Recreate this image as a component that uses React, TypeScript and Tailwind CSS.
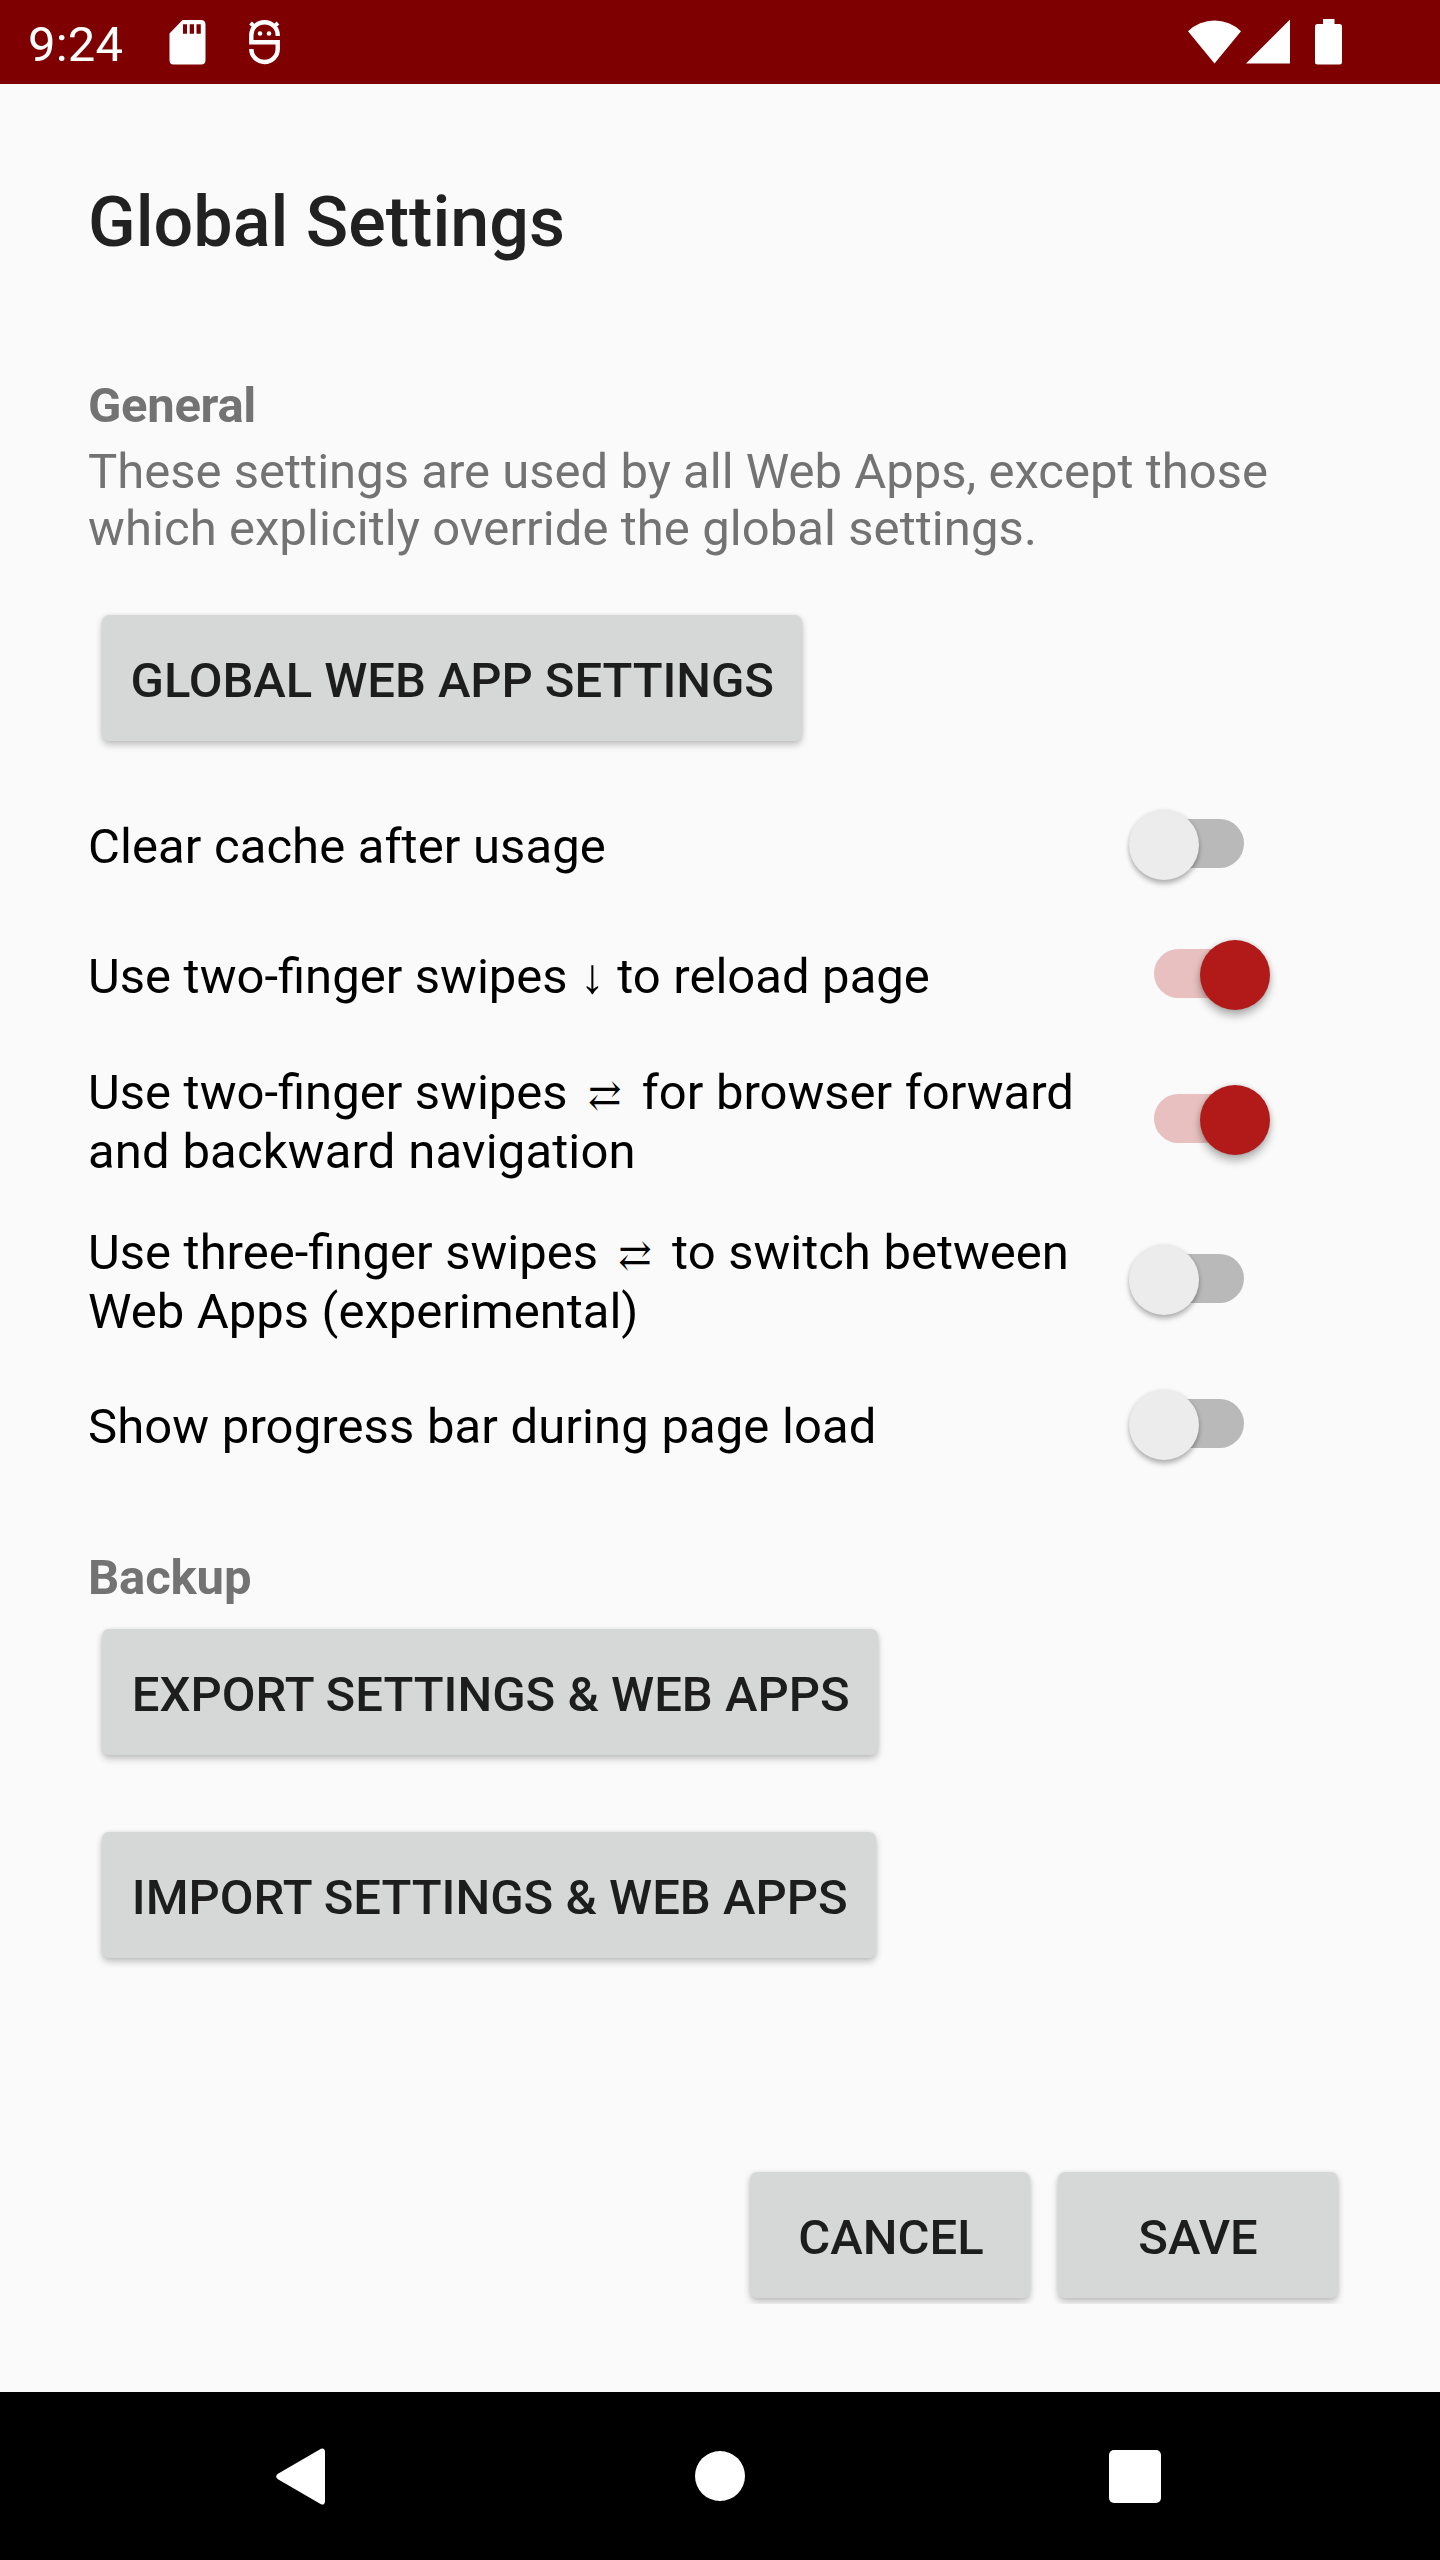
import type { ReactNode } from "react";

function StatusBar() {
  return (
    <header className="flex h-[84px] items-start bg-[#7f0000] text-white">
      <span className="ml-[28px] mt-4 w-[141px] text-[49px] leading-[57px] tracking-[0.2px]">9:24</span>
      <svg className="mt-5" width="37" height="45" viewBox="0 0 37 45" fill="currentColor">
        <path
          fillRule="evenodd"
          d="M13.500 0H32Q36.500 0 36.500 4.500V40Q36.500 44.500 32 44.500H4.500Q0.500 44.500 0.500 40V13.500ZM14 4.300V13.700H18V4.300ZM20.700 4.300V13.700H25V4.300ZM27.500 4.300V13.700H31.800V4.300Z"
        />
      </svg>
      <svg className="ml-[43px] mt-5" width="31" height="45" viewBox="0 0 31 45" fill="none" stroke="currentColor" strokeWidth="4.400">
        <path d="M28.700 16V15A13.200 12.700 0 0 0 2.300 15V22.300H28.700V29A13.200 13 0 0 1 2.300 29" />
        <path d="M1.500 3 6 7M29 3 24.500 7" strokeWidth="4" />
        <circle cx="11" cy="13.500" r="2.300" fill="currentColor" stroke="none" />
        <circle cx="20" cy="13.500" r="2.300" fill="currentColor" stroke="none" />
      </svg>
      <svg className="ml-auto mt-[19px]" width="53" height="45" viewBox="0 0 53 45" fill="currentColor">
        <path d="M26.500 44.500 0 12.300A38 38 0 0 1 53 12.300Z" />
      </svg>
      <svg className="ml-[5px] mt-[19px]" width="44" height="45" viewBox="0 0 44 45" fill="currentColor">
        <path d="M44 0.500V44.500H0Z" />
      </svg>
      <svg className="ml-[25px] mr-[98px] mt-[19px]" width="27" height="46" viewBox="0 0 27 46" fill="currentColor">
        <path d="M8 0H19.500V5H24.500Q27 5 27 7.500V43Q27 45.500 24.500 45.500H2.500Q0 45.500 0 43V7.500Q0 5 2.500 5H8Z" />
      </svg>
    </header>
  );
}

function Button({ children, className = "" }: { children: ReactNode; className?: string }) {
  return (
    <button
      className={`block h-[126px] shrink-0 whitespace-nowrap rounded-[7px] bg-[#d6d8d7] pt-[4px] text-[49px] font-medium leading-[57px] text-[#1d1d1d] shadow-[0_4px_7px_rgba(0,0,0,0.22),0_0_4px_rgba(0,0,0,0.08)] ${className}`}
    >
      {children}
    </button>
  );
}

function Switch({ on = false, className = "" }: { on?: boolean; className?: string }) {
  return (
    <span role="switch" aria-checked={on} className={`relative flex h-[70px] items-center ${className}`}>
      <span className={`mb-[3px] h-[49px] w-[106px] rounded-full ${on ? "ml-[26px] bg-[#e8c0c0]" : "ml-[10px] bg-[#b9b9b9]"}`} />
      <span
        className={`absolute top-[-0.5px] size-[70.5px] rounded-full ${
          on
            ? "left-[71.5px] bg-[#b21a1a] shadow-[0_6px_8px_rgba(0,0,0,0.28),0_0_5px_rgba(0,0,0,0.15)]"
            : "left-[0.5px] bg-[#ececec] shadow-[0_4px_5px_rgba(0,0,0,0.26),0_0_4px_rgba(0,0,0,0.1)]"
        }`}
      />
    </span>
  );
}

function Row({ children, on, className, switchClass }: { children: ReactNode; on?: boolean; className: string; switchClass: string }) {
  return (
    <div className={`flex items-start text-black ${className}`}>
      <p className="w-[1040px] whitespace-nowrap text-[49px] leading-[59px] [word-spacing:0.4px]">{children}</p>
      <Switch on={on} className={switchClass} />
    </div>
  );
}

function SwapArrows() {
  return <span className="inline-block w-[49px] text-center font-['DejaVu_Serif',serif] text-[40px] leading-none">⇄</span>;
}

export default function App() {
  return (
    <div className="flex h-[2560px] w-[1440px] flex-col overflow-hidden bg-[#fafafa] font-['Roboto',sans-serif]">
      <StatusBar />
      <main className="flex flex-1 flex-col items-start px-[88px]">
        <h1 className="mt-[97px] text-[70px] font-medium leading-[82px] tracking-[0.03px] text-[#212121]">Global Settings</h1>
        <h2 className="mt-[114px] text-[49px] font-bold leading-[57px] tracking-[-0.3px] text-[#737373]">General</h2>
        <p className="mt-[9px] whitespace-nowrap text-[49px] leading-[57px] text-[#737373]">
          <span className="tracking-[0.02px]">These settings are used by all Web Apps, except those</span>
          <br />
          <span className="tracking-[0.07px]">which explicitly override the global settings.</span>
        </p>
        <Button className="ml-[14px] mt-[58px] w-[699.5px] pl-px tracking-[-0.07px]">GLOBAL WEB APP SETTINGS</Button>
        <Row className="mt-[76px] h-[130px]" switchClass="-mt-[7px]">
          <span className="tracking-[0.06px]">Clear cache after usage</span>
        </Row>
        <Row className="h-[116px]" switchClass="-mt-[7px]" on>Use two-finger swipes ↓ to reload page</Row>
        <Row className="h-[160px]" switchClass="mt-[22px]" on>
          Use two-finger swipes <SwapArrows /> for browser forward
          <br />
          <span className="tracking-[0.14px]">and backward navigation</span>
        </Row>
        <Row className="h-[174px]" switchClass="mt-[22px]">
          Use three-finger swipes <SwapArrows /> to switch between
          <br />
          Web Apps (experimental)
        </Row>
        <Row className="h-[152px]" switchClass="-mt-[7px]">
          <span className="tracking-[0.08px]">Show progress bar during page load</span>
        </Row>
        <h2 className="text-[49px] font-bold leading-[57px] tracking-[-0.15px] text-[#737373]">Backup</h2>
        <Button className="ml-[14px] mt-[23px] w-[775.5px] pl-[2px]">EXPORT SETTINGS &amp; WEB APPS</Button>
        <Button className="ml-[14px] mt-[77px] w-[773.5px] pl-[2px]">IMPORT SETTINGS &amp; WEB APPS</Button>
        <div className="mt-[200px] flex gap-[28px] self-end overflow-hidden px-[14px] pb-[6px] pt-[14px]">
          <Button className="w-[280px] pl-[2px]">CANCEL</Button>
          <Button className="w-[280px]">SAVE</Button>
        </div>
      </main>
      <nav className="flex h-[168px] items-center bg-black pl-[276px] text-white">
        <svg width="49" height="57" viewBox="0 0 49 57" fill="currentColor">
          <path d="M45 0.700Q48.500 -0.500 49 3.500V53.500Q48.500 57.500 45 56.300L1.500 31Q-1 28.500 1.500 26Z" />
        </svg>
        <span className="ml-[370px] size-[50px] rounded-full bg-white" />
        <span className="ml-[364px] h-[53px] w-[52px] rounded-[5px] bg-white" />
      </nav>
    </div>
  );
}
